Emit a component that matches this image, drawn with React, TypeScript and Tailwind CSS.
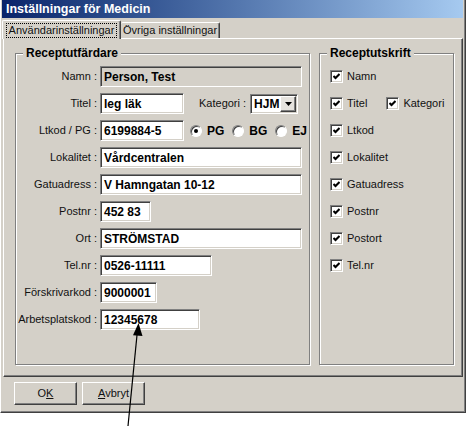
import React from "react";

const sunken =
  "border border-t-[#808080] border-l-[#808080] border-b-white border-r-white shadow-[inset_1px_1px_0_#404040,inset_-1px_-1px_0_#d4d0c8]";
const raised =
  "border border-t-white border-l-white border-b-[#404040] border-r-[#404040] shadow-[inset_-1px_-1px_0_#808080]";
const etched =
  "border border-[#808080] shadow-[inset_1px_1px_0_#ffffff,1px_1px_0_#ffffff]";

function Field({
  w,
  value,
  grey,
}: {
  w: string;
  value: string;
  grey?: boolean;
}) {
  return (
    <div
      className={`${w} h-[21px] ${sunken} ${
        grey ? "bg-[#d4d0c8]" : "bg-white"
      } flex items-center pl-[3px] text-[12px] font-bold text-black whitespace-nowrap overflow-hidden`}
    >
      {value}
    </div>
  );
}

function Row({ label, children }: { label: string; children: React.ReactNode }) {
  return (
    <div className="flex items-center h-[21px]">
      <div className="w-[81px] text-right text-[11px] text-[#111] whitespace-nowrap">
        {label}
      </div>
      <div className="ml-[3px] flex items-center">{children}</div>
    </div>
  );
}

function Radio({ checked, label }: { checked?: boolean; label: string }) {
  return (
    <div className="flex items-center gap-[5px]">
      <div className="w-[12px] h-[12px] rounded-full bg-white border border-t-[#808080] border-l-[#808080] border-b-white border-r-white shadow-[inset_1px_1px_0_#404040] flex items-center justify-center">
        {checked && <div className="w-[4px] h-[4px] rounded-full bg-black" />}
      </div>
      <span className="text-[12px] font-bold text-black">{label}</span>
    </div>
  );
}

function Check({ label }: { label: string }) {
  return (
    <div className="flex items-center gap-[4px]">
      <div
        className={`w-[13px] h-[13px] bg-white ${sunken} flex items-center justify-center`}
      >
        <svg width="7" height="7" viewBox="0 0 7 7">
          <path d="M0.5 3 L2.5 5 L6.5 1" fill="none" stroke="#000" strokeWidth="2" />
        </svg>
      </div>
      <span className="text-[11px] text-[#111]">{label}</span>
    </div>
  );
}

function Group({
  title,
  className,
  children,
}: {
  title: string;
  className: string;
  children: React.ReactNode;
}) {
  return (
    <div className={`relative ${etched} ${className}`}>
      <div className="absolute left-[7px] -top-[8px] px-[3px] bg-[#d4d0c8] text-[12px] font-bold text-black leading-[14px]">
        {title}
      </div>
      {children}
    </div>
  );
}

export default function App() {
  return (
    <div className="relative w-[468px] h-[426px] bg-white overflow-hidden font-['Liberation_Sans',Arial,sans-serif]">
      <div className="w-[466px] h-[413px] bg-[#d4d0c8] border-l border-l-white border-r border-r-[#404040] border-b border-b-[#404040] shadow-[inset_-1px_-1px_0_#808080] flex flex-col">
        {/* title bar */}
        <div className="ml-[1px] w-[461px] h-[18px] bg-gradient-to-r from-[#0a246a] to-[#a6caf0] flex items-center pl-[4px]">
          <span className="text-white font-bold text-[12.5px]">
            Inställningar för Medicin
          </span>
        </div>

        {/* tabs */}
        <div className="ml-[1px] mt-[2px] h-[18px] flex items-end">
          <div className="relative z-10 -mb-[1px] w-[119px] h-[19px] bg-[#d4d0c8] border-t border-l border-t-white border-l-white border-r border-r-[#404040] shadow-[inset_-1px_0_0_#808080] rounded-t-[2px] flex items-center justify-center">
            <span className="text-[11px] text-[#111] px-[2px] outline outline-1 outline-dotted outline-black leading-[13px]">
              Användarinställningar
            </span>
          </div>
          <div className="w-[99px] h-[16px] bg-[#d4d0c8] border-t border-t-white border-r border-r-[#404040] shadow-[inset_-1px_0_0_#808080] rounded-t-[2px] flex items-center justify-center">
            <span className="text-[11px] text-[#111]">Övriga inställningar</span>
          </div>
        </div>

        {/* tab panel */}
        <div className="ml-[2px] w-[460px] h-[339px] border border-t-white border-l-white border-b-[#404040] border-r-[#404040] shadow-[inset_-1px_-1px_0_#808080] pt-[14px] pl-[11px] flex gap-[9px]">
          <Group title="Receptutfärdare" className="w-[295px] h-[312px]">
            <div className="pt-[12px] flex flex-col gap-[6px]">
              <Row label="Namn :">
                <Field w="w-[202px]" value="Person, Test" grey />
              </Row>
              <Row label="Titel :">
                <Field w="w-[84px]" value="leg läk" />
                <span className="ml-[15px] text-[11px] text-[#111]">Kategori :</span>
                <div className={`ml-[4px] w-[48px] h-[20px] bg-white ${sunken} flex items-center`}>
                  <span className="pl-[3px] flex-1 font-bold text-[12px] text-black">
                    HJM
                  </span>
                  <div
                    className={`mr-[1px] w-[16px] h-[16px] bg-[#e6e3de] ${raised} flex items-center justify-center`}
                  >
                    <svg width="7" height="4" viewBox="0 0 7 4">
                      <path d="M0 0h7L3.5 4z" fill="#000" />
                    </svg>
                  </div>
                </div>
              </Row>
              <Row label="Ltkod / PG :">
                <Field w="w-[84px]" value="6199884-5" />
                <div className="ml-[6px] flex items-center gap-[8px]">
                  <Radio checked label="PG" />
                  <Radio label="BG" />
                  <Radio label="EJ" />
                </div>
              </Row>
              <Row label="Lokalitet :">
                <Field w="w-[202px]" value="Vårdcentralen" />
              </Row>
              <Row label="Gatuadress :">
                <Field w="w-[202px]" value="V Hamngatan 10-12" />
              </Row>
              <Row label="Postnr :">
                <Field w="w-[51px]" value="452 83" />
              </Row>
              <Row label="Ort :">
                <Field w="w-[202px]" value="STRÖMSTAD" />
              </Row>
              <Row label="Tel.nr :">
                <Field w="w-[112px]" value="0526-11111" />
              </Row>
              <Row label="Förskrivarkod :">
                <Field w="w-[57px]" value="9000001" />
              </Row>
              <Row label="Arbetsplatskod :">
                <Field w="w-[100px]" value="12345678" />
              </Row>
            </div>
          </Group>

          <Group title="Receptutskrift" className="w-[135px] h-[312px]">
            <div className="pt-[12px] pl-[10px] flex flex-col gap-[6px]">
              <div className="h-[21px] flex items-center">
                <Check label="Namn" />
              </div>
              <div className="h-[21px] flex items-center gap-[19px]">
                <Check label="Titel" />
                <Check label="Kategori" />
              </div>
              {["Ltkod", "Lokalitet", "Gatuadress", "Postnr", "Postort", "Tel.nr"].map(
                (t) => (
                  <div key={t} className="h-[21px] flex items-center">
                    <Check label={t} />
                  </div>
                )
              )}
            </div>
          </Group>
        </div>

        {/* buttons */}
        <div className="pt-[5px] pl-[13px] flex gap-[5px]">
          <button
            className={`w-[63px] h-[23px] bg-[#d4d0c8] ${raised} text-[11px] text-[#111]`}
          >
            O<span className="underline">K</span>
          </button>
          <button
            className={`w-[63px] h-[23px] bg-[#d4d0c8] ${raised} text-[11px] text-[#111]`}
          >
            <span className="underline">A</span>vbryt
          </button>
        </div>
      </div>

      {/* pointer arrow */}
      <svg
        className="absolute left-0 top-0 pointer-events-none"
        width="468"
        height="426"
        viewBox="0 0 468 426"
      >
        <line x1="128" y1="426" x2="137.2" y2="333" stroke="#000" strokeWidth="1.2" />
        <polygon points="138.5,323 142.5,336 133,335.2" fill="#000" />
      </svg>
    </div>
  );
}
